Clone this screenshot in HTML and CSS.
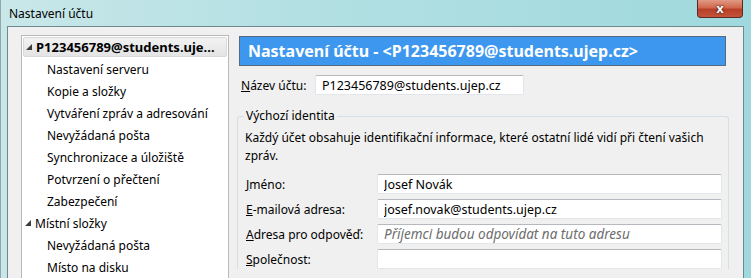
FILE: index.html
```html
<!DOCTYPE html>
<html lang="cs">

<head>
    <meta charset="utf-8">
    <meta name="viewport" content="width=device-width, initial-scale=1.0">
    <title>Nastavení účtu</title>
    <link rel="stylesheet" href="styles.css">
</head>

<body>

    <div class="window">
        <div class="titlebar">
            <span class="title">Nastavení účtu</span>
            <div class="close">x</div>
        </div>

        <div class="client">
            <div class="tree">
                <div class="tree-item root selected">
                    <svg class="twisty" width="6" height="6" viewBox="0 0 6 6"><polygon points="6,0 6,6 0,6" /></svg>
                    P123456789@students.uje...
                </div>
                <div class="tree-item child">Nastavení serveru</div>
                <div class="tree-item child">Kopie a složky</div>
                <div class="tree-item child">Vytváření zpráv a adresování</div>
                <div class="tree-item child">Nevyžádaná pošta</div>
                <div class="tree-item child">Synchronizace a úložiště</div>
                <div class="tree-item child">Potvrzení o přečtení</div>
                <div class="tree-item child">Zabezpečení</div>
                <div class="tree-item root">
                    <svg class="twisty" width="6" height="6" viewBox="0 0 6 6"><polygon points="6,0 6,6 0,6" /></svg>
                    Místní složky
                </div>
                <div class="tree-item child">Nevyžádaná pošta</div>
                <div class="tree-item child">Místo na disku</div>
            </div>

            <div class="panel">
                <div class="panel-header">Nastavení účtu - &lt;P123456789@students.ujep.cz&gt;</div>

                <div class="name-row">
                    <label><u>N</u>ázev účtu:</label>
                    <input class="field name-field" type="text" value="P123456789@students.ujep.cz" readonly>
                </div>

                <fieldset class="identity">
                    <legend>Výchozí identita</legend>
                    <p>Každý účet obsahuje identifikační informace, které ostatní lidé vidí při čtení vašich zpráv.</p>

                    <div class="form-grid">
                        <label><u>J</u>méno:</label>
                        <input class="field" type="text" value="Josef Novák" readonly>
                        <label><u>E</u>-mailová adresa:</label>
                        <input class="field" type="text" value="josef.novak@students.ujep.cz" readonly>
                        <label><u>A</u>dresa pro odpověď:</label>
                        <input class="field" type="text" placeholder="Příjemci budou odpovídat na tuto adresu" readonly>
                        <label><u>S</u>polečnost:</label>
                        <input class="field" type="text" readonly>
                    </div>
                </fieldset>
            </div>
        </div>
    </div>

</body>

</html>
```

FILE: styles.css
```css
* {
    box-sizing: border-box;
}

body {
    margin: 0;
    font-family: "Noto Sans", "DejaVu Sans", sans-serif;
    font-size: 12px;
    color: #000;
    overflow: hidden;
}

.window {
    width: 751px;
    height: 278px;
    display: flex;
    flex-direction: column;
    background: linear-gradient(90deg, #c9e7e9 0%, #b3e0e3 40%, #9fd9dd 100%);
    border-left: 1px solid #8fa9ab;
}

.titlebar {
    position: relative;
    height: 28px;
    display: flex;
    align-items: center;
    padding-left: 8px;
}

.close {
    position: absolute;
    top: 0;
    right: 8px;
    width: 46px;
    height: 18px;
    border: 1px solid #5e2a20;
    border-top: none;
    border-radius: 0 0 4px 4px;
    background: linear-gradient(#e39a86 0%, #d0684d 45%, #b73f27 55%, #c4553a 100%);
    color: #fff;
    font-weight: bold;
    font-size: 13px;
    line-height: 16px;
    text-align: center;
    text-shadow: 0 0 2px #3a1008, 0 0 1px #3a1008;
}

.client {
    flex: 1;
    display: flex;
    margin: 0 7px 0 6px;
    padding: 8px 14px 0 13px;
    background: #f0f0f0;
    border: 1px solid #6e8a8e;
    border-bottom: none;
}

.tree {
    width: 208px;
    background: #fff;
    border: 1px solid #b9b9b9;
    border-bottom: none;
}

.tree-item {
    height: 22px;
    display: flex;
    align-items: center;
    white-space: nowrap;
}

.root {
    padding-left: 3px;
}

.twisty {
    margin-right: 4px;
    fill: #3c3c3c;
}

.child {
    padding-left: 25px;
}

.selected {
    height: 20px;
    margin: 1px;
    padding-left: 2px;
    font-weight: bold;
    font-size: 13px;
    background: linear-gradient(#f2f2f2, #e4e4e4);
    border: 1px solid #d9d9d9;
    border-radius: 2px;
}

.panel {
    flex: 1;
    margin-left: 8px;
    display: flex;
    flex-direction: column;
}

.panel-header {
    height: 30px;
    margin: 1px 3px 0 2px;
    padding-left: 8px;
    display: flex;
    align-items: center;
    background: #3d97ef;
    border: 1px solid #566b80;
    color: #fff;
    font-weight: bold;
    font-size: 16px;
    white-space: nowrap;
}

.name-row {
    display: flex;
    align-items: center;
    margin-top: 9px;
    padding-left: 4px;
}

.name-row label {
    width: 74px;
}

.field {
    height: 20px;
    padding: 0 0 0 6px;
    font-family: inherit;
    font-size: 12.5px;
    color: #000;
    background: #fff;
    border: 1px solid #e2e6ea;
    border-top-color: #b5b8bd;
    border-radius: 2px;
    outline: none;
}

.field::placeholder {
    color: #6d6d6d;
    font-style: italic;
    font-size: 13.5px;
}

.name-field {
    width: 209px;
}

.identity {
    margin: 13px 0 0 0;
    padding: 0 6px 0 8px;
    border: 1px solid #d5dfe5;
    border-bottom: none;
    border-radius: 3px 3px 0 0;
}

.identity legend {
    padding: 0 2px;
    margin-left: -2px;
    line-height: 16px;
}

.identity p {
    margin: 5px 0 0 -1px;
    line-height: 18px;
}

.form-grid {
    display: grid;
    grid-template-columns: 131px 1fr;
    row-gap: 5px;
    align-items: center;
    margin-top: 9px;
}
```
